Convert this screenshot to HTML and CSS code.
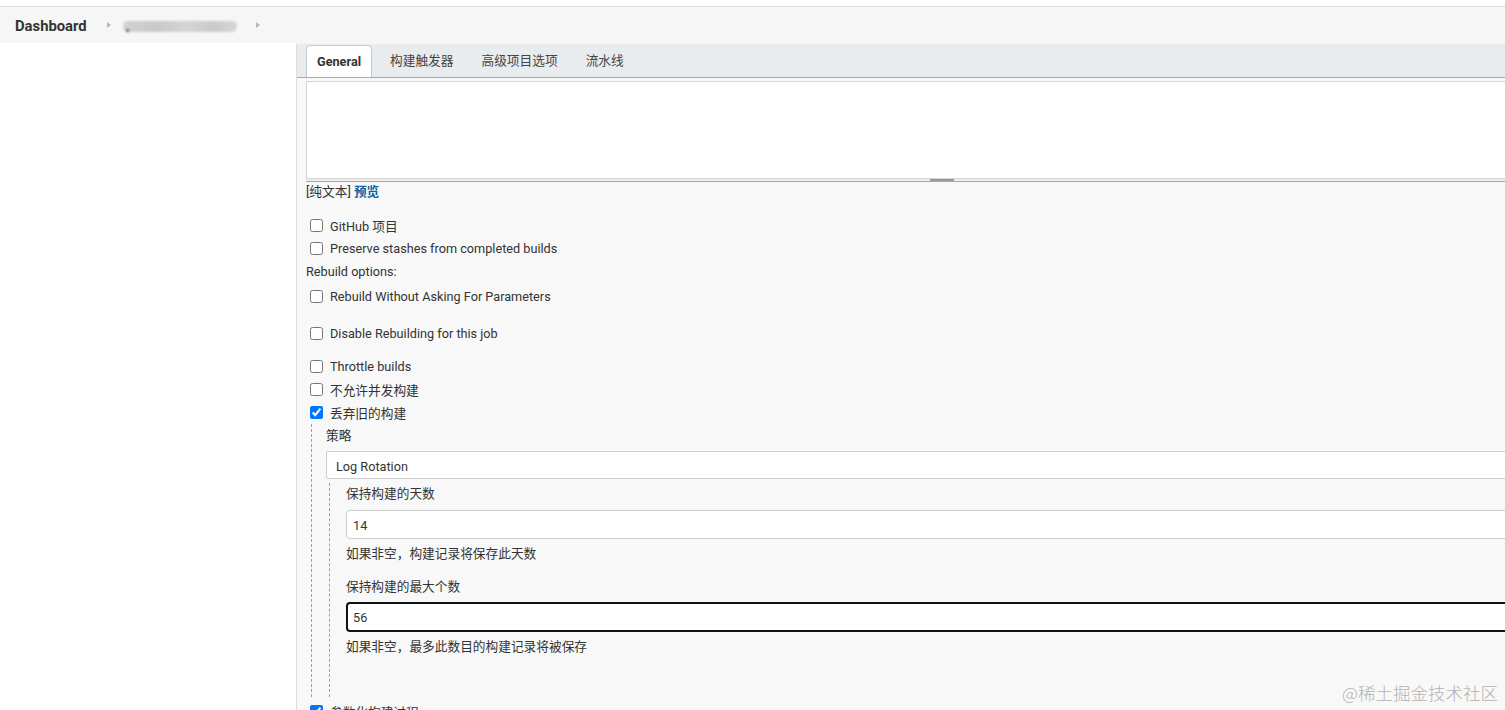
FILE: index.html
```html
<!DOCTYPE html>
<html lang="zh-CN">
<head>
<meta charset="utf-8">
<title>Jenkins 配置</title>
<link rel="stylesheet" href="styles.css">
</head>
<body>
<div class="topstrip"></div>
<nav class="breadcrumbs">
  <span class="crumb">Dashboard</span>
  <span class="chev"></span>
  <span class="blurred"><span class="dot"></span></span>
  <span class="chev second"></span>
</nav>
<div class="page">
  <aside class="side"></aside>
  <main class="content">
    <div class="tabbar">
      <div class="tab active">General</div>
      <div class="tab">构建触发器</div>
      <div class="tab">高级项目选项</div>
      <div class="tab">流水线</div>
    </div>
    <div class="form">
      <div class="textarea"></div>
      <div class="handle"><span class="grip"></span></div>
      <div class="preview">[纯文本] <a class="link">预览</a></div>

      <label class="check first"><input type="checkbox"><span>GitHub 项目</span></label>
      <label class="check"><input type="checkbox"><span>Preserve stashes from completed builds</span></label>
      <div class="plain">Rebuild options:</div>
      <label class="check gap-s"><input type="checkbox"><span>Rebuild Without Asking For Parameters</span></label>
      <label class="check gap-l"><input type="checkbox"><span>Disable Rebuilding for this job</span></label>
      <label class="check gap-m"><input type="checkbox"><span>Throttle builds</span></label>
      <label class="check"><input type="checkbox"><span>不允许并发构建</span></label>
      <label class="check"><input type="checkbox" checked><span>丢弃旧的构建</span></label>

      <div class="nested">
        <div class="plain">策略</div>
        <div class="select">Log Rotation</div>
        <div class="nested inner">
          <div class="field-label">保持构建的天数</div>
          <div class="input">14</div>
          <div class="help">如果非空，构建记录将保存此天数</div>
          <div class="field-label second">保持构建的最大个数</div>
          <div class="input focused">56</div>
          <div class="help">如果非空，最多此数目的构建记录将被保存</div>
        </div>
      </div>

      <label class="check after"><input type="checkbox" checked><span>参数化构建过程</span></label>
    </div>
  </main>
</div>
<div class="watermark">@稀土掘金技术社区</div>
</body>
</html>
```

FILE: styles.css
```css
html, body {
  margin: 0;
  padding: 0;
  height: 100%;
  overflow: hidden;
  background: #ffffff;
  font-family: Roboto, "Noto Sans CJK SC", sans-serif;
  font-size: 12.7px;
  color: #333333;
}

.topstrip {
  height: 6px;
  background: #ffffff;
  border-bottom: 1px solid #dddddd;
}

.breadcrumbs {
  height: 36px;
  background: #f6f6f6;
  display: flex;
  align-items: center;
  padding-left: 15px;
  padding-top: 2px;
  box-sizing: border-box;
}

.crumb {
  font-size: 14.8px;
  font-weight: bold;
  color: #333333;
}

.chev {
  width: 0;
  height: 0;
  border-top: 3.5px solid transparent;
  border-bottom: 3.5px solid transparent;
  border-left: 4px solid #b8b8b8;
  margin-left: 20px;
  margin-top: -2px;
}

.chev.second {
  margin-left: 19px;
}

.blurred {
  position: relative;
  width: 114px;
  height: 11px;
  margin-left: 12px;
  background: linear-gradient(90deg, #d2d2d2 0%, #c9c9c9 30%, #d4d4d4 55%, #cacaca 80%, #d6d6d6 100%);
  border-radius: 5px;
  filter: blur(1px);
}

.blurred .dot {
  position: absolute;
  left: 3px;
  top: 8px;
  width: 3px;
  height: 3px;
  border-radius: 50%;
  background: #555555;
}

.page {
  display: flex;
  height: calc(100% - 43px);
}

.side {
  width: 296px;
  flex-shrink: 0;
  background: #ffffff;
  border-right: 1px solid #dddddd;
}

.content {
  width: 1300px;
  flex-shrink: 0;
  background: #f8f8f8;
}

.tabbar {
  height: 34px;
  background: #e9ecef;
  border-bottom: 1px solid #a9a9a9;
  display: flex;
  align-items: flex-end;
  padding-left: 9px;
  box-shadow: inset 0 1px 0 #f4f5f6;
}

.tab {
  height: 32px;
  line-height: 32px;
  padding: 0 10px;
  margin-right: 8px;
  color: #444444;
  box-sizing: border-box;
}

.tab.active {
  background: #ffffff;
  border: 1px solid #c8c8c8;
  border-bottom: 0;
  border-radius: 4px 4px 0 0;
  font-weight: bold;
  color: #333333;
  line-height: 31px;
}

.form {
  padding: 3px 0 0 9px;
  width: 1272px;
}

.textarea {
  height: 96px;
  background: #ffffff;
  border: 1px solid #d4d4d4;
}

.handle {
  height: 2px;
  background: #ececec;
  border-bottom: 1px solid #a8a8a8;
  display: flex;
  justify-content: center;
  align-items: flex-end;
}

.grip {
  width: 24px;
  height: 2px;
  background: #9a9a9a;
}

.preview {
  margin-top: 1px;
  line-height: 18px;
  height: 18px;
}

.link {
  color: #0b63a3;
  font-weight: bold;
}

.check {
  display: flex;
  align-items: center;
  height: 23px;
}

.check input {
  width: 13px;
  height: 13px;
  margin: 0 7px 0 4px;
}

.check.first { margin-top: 13px; }
.check.gap-s { margin-top: 2px; }
.check.gap-l { margin-top: 14px; }
.check.gap-m { margin-top: 10px; }
.check.after { margin-top: 3px; }

.plain {
  height: 23px;
  line-height: 23px;
}

.nested {
  border-left: 1px dashed #a0a0a0;
  margin-left: 5px;
  padding-left: 14px;
}

.select {
  margin-top: 4px;
  height: 23px;
  line-height: 23px;
  padding-top: 3px;
  background: #ffffff;
  border: 1px solid #cccccc;
  border-radius: 2px;
  padding-left: 9px;
}

.nested.inner {
  margin-top: 4px;
  margin-left: 3px;
  padding-top: 1px;
  padding-left: 16px;
  padding-bottom: 41px;
}

.field-label {
  height: 20px;
  line-height: 20px;
}

.field-label.second {
  margin-top: 14px;
}

.input {
  margin-top: 6px;
  height: 25px;
  line-height: 25px;
  padding-top: 2px;
  background: #ffffff;
  border: 1px solid #cccccc;
  border-radius: 4px;
  padding-left: 6px;
}

.input.focused {
  margin-top: 5px;
  height: 25px;
  line-height: 25px;
  padding-top: 1px;
  border: 2px solid #111111;
  padding-left: 5px;
}

.help {
  margin-top: 6px;
  height: 18px;
  line-height: 18px;
}

.watermark {
  position: absolute;
  right: 7px;
  bottom: 5px;
  font-family: "Noto Sans CJK SC", sans-serif;
  font-size: 17.5px;
  font-weight: 300;
  color: #b3b3b3;
}
```
